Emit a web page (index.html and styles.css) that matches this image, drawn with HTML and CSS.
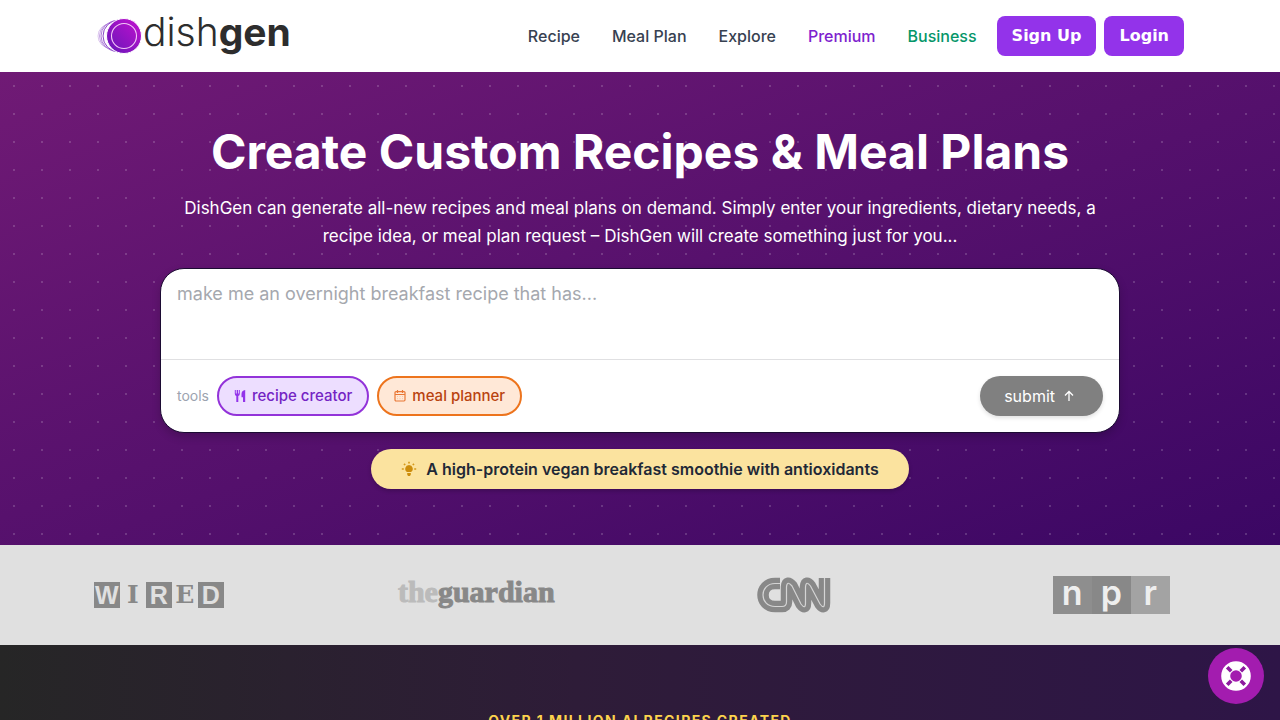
FILE: index.html
```html
<!DOCTYPE html>
<html lang="en">
<head>
<meta charset="utf-8">
<meta name="viewport" content="width=device-width, initial-scale=1">
<title>DishGen</title>
<link rel="stylesheet" href="styles.css">
</head>
<body>
<header class="header">
  <a class="brand" href="#" aria-label="dishgen">
    <svg class="brand-mark" viewBox="0 0 46 40" aria-hidden="true">
      <defs>
        <linearGradient id="plate" x1="0" y1="1" x2="1" y2="0">
          <stop offset="0" stop-color="#6416b8"/>
          <stop offset="1" stop-color="#c411cf"/>
        </linearGradient>
      </defs>
      <g fill="#fff" stroke="#8a45c8">
        <circle cx="14" cy="20" r="12" stroke-opacity=".3"/>
        <circle cx="17" cy="20" r="13.500" stroke-opacity=".5"/>
        <circle cx="20" cy="20" r="15" stroke-opacity=".7"/>
        <circle cx="23" cy="20" r="16"/>
      </g>
      <circle cx="28" cy="20" r="17.500" fill="url(#plate)" stroke="#fff"/>
      <circle cx="28" cy="20" r="12.500" fill="none" stroke="#f3c8f7" stroke-width="1.100"/>
    </svg>
    <span class="brand-name">dish<b>gen</b></span>
  </a>
  <nav class="nav">
    <a href="#">Recipe</a>
    <a href="#">Meal Plan</a>
    <a href="#">Explore</a>
    <a class="nav-premium" href="#">Premium</a>
    <a class="nav-business" href="#">Business</a>
  </nav>
  <div class="account">
    <button type="button">Sign Up</button>
    <button type="button">Login</button>
  </div>
</header>

<main>
  <section class="hero">
    <div class="hero-inner">
      <h1>Create Custom Recipes &amp; Meal Plans</h1>
      <p class="lead">DishGen can generate all-new recipes and meal plans on demand. Simply enter your ingredients, dietary needs, a recipe idea, or meal plan request – DishGen will create something just for you...</p>
      <form class="prompt">
        <textarea aria-label="Recipe request" placeholder="make me an overnight breakfast recipe that has..."></textarea>
        <div class="prompt-bar">
          <span class="tools-label">tools</span>
          <button type="button" class="tool tool-recipe">
            <svg viewBox="0 0 12 12" aria-hidden="true"><path d="M.8 0v3.800q0 1.700 1.500 2.200V12h2V6q1.500-.5 1.500-2.200V0H4.900v3.500h-.8V0H2.700v3.500h-.9V0zM11.200 0Q7.500.7 7.500 4v3.200H9V12h2.200z" fill="currentColor"/></svg>
            recipe creator
          </button>
          <button type="button" class="tool tool-meal">
            <svg viewBox="0 0 12 12" aria-hidden="true"><path d="M2 1.600h8q1 0 1 1v7.200q0 1.200-1 1.200H2q-1 0-1-1.200V2.600q0-1 1-1zM1 4.500h10M3.500 0v3M8.500 0v3" fill="none" stroke="currentColor" stroke-width="1.200"/><path d="M3 6.500h1m1.500 0h1m1.500 0h1M3 8.700h1m1.500 0h1m1.500 0h1" stroke="currentColor" stroke-opacity=".3"/></svg>
            meal planner
          </button>
          <button type="submit" class="submit">submit
            <svg viewBox="0 0 12 12" aria-hidden="true"><path d="M6 11V1.500M2 5.500l4-4 4 4" fill="none" stroke="currentColor" stroke-width="1.300"/></svg>
          </button>
        </div>
      </form>
      <button type="button" class="idea">
        <svg viewBox="0 0 16 16" aria-hidden="true">
          <path d="M8 4a3.800 3.800 0 0 0-2 7h4a3.800 3.800 0 0 0-2-7zM6.200 12h3.600v1.500L9 15H7l-.8-1.500z" fill="#cc8d0c"/>
          <path d="M8 .8v1.700M3 2.800l1.200 1.200M13 2.800l-1.200 1.200M.8 8h2M13.200 8h2" stroke="#d59a1c" stroke-width="1.700"/>
        </svg>
        A high-protein vegan breakfast smoothie with antioxidants
      </button>
    </div>
  </section>

  <section class="press">
    <div class="wired"><b>W</b><i>I</i><b>R</b><i>E</i><b>D</b></div>
    <div class="guardian"><span>the</span>guardian</div>
    <svg class="cnn" viewBox="0 0 74 36" role="img" aria-label="CNN">
      <defs>
        <path id="cnn-line" d="M23 6.500H18C2 6.500 2 29.500 18 29.500H25Q29.500 29.500 29.500 25V10Q30 3 35 9L44 27Q48.500 33 48.500 26V10Q49 3 53.500 9L63 27Q67.500 33 67.500 26V1"/>
      </defs>
      <use href="#cnn-line" fill="none" stroke="#888" stroke-width="11.500"/>
      <use href="#cnn-line" fill="none" stroke="#d4d4d4" stroke-width="1.200"/>
    </svg>
    <div class="npr"><span>n</span><span>p</span><span>r</span></div>
  </section>

  <section class="stats">
    <h2>Over 1 Million AI Recipes Created</h2>
  </section>
</main>

<button type="button" class="help" aria-label="Help">
  <svg viewBox="0 0 30 30" aria-hidden="true">
    <circle cx="15" cy="15" r="10.300" fill="none" stroke="#fff" stroke-width="9"/>
    <path d="M6.200 6.200l4 4M23.800 6.200l-4 4M6.200 23.800l4-4M23.800 23.800l-4-4" stroke="#8d1a9e" stroke-width="3.600"/>
  </svg>
</button>
</body>
</html>
```

FILE: styles.css
```css
*, *::before, *::after { box-sizing: border-box; }
body {
  margin: 0;
  font-family: Inter, "Liberation Sans", sans-serif;
  font-size: 16px;
  line-height: 24px;
  color: #1f2937;
}
button, textarea { font: inherit; margin: 0; }
button { border: 0; cursor: pointer; }
a { text-decoration: none; }

.header {
  display: flex;
  align-items: center;
  height: 72px;
  padding: 0 96px;
  background: #fff;
}
.brand { display: flex; align-items: center; color: #2d2d2d; }
.brand-mark { width: 46px; height: 40px; }
.brand-name {
  padding: 0 0 8px 1px;
  font-size: 39px;
  line-height: 40px;
  font-weight: 300;
}
.brand-name b { font-weight: 700; }
.nav { display: flex; gap: 32px; margin-left: auto; font-weight: 500; }
.nav a { color: #374151; }
.nav .nav-premium { color: #7e22ce; }
.nav .nav-business { color: #059669; }
.account { display: flex; gap: 8px; margin-left: 20px; }
.account button {
  height: 40px;
  padding: 0 15px;
  border-radius: 8px;
  background: #9333ea;
  color: #fff;
  font-family: "DejaVu Sans", sans-serif;
  font-weight: 700;
}

.hero {
  padding: 56px 16px;
  background:
    radial-gradient(circle, rgba(255, 255, 255, .17) 1px, transparent 1px) 0 0 / 28px 28px,
    linear-gradient(to bottom right, #701a75, #3b0764);
}
.hero-inner {
  display: flex;
  flex-direction: column;
  align-items: center;
  max-width: 960px;
  margin: 0 auto;
}
h1 {
  margin: 0 0 18px;
  color: #fff;
  font-size: 48px;
  line-height: 48px;
  font-weight: 700;
  text-align: center;
}
.lead {
  margin: 0 0 18px;
  color: #fff;
  font-size: 17px;
  line-height: 28px;
  text-align: center;
}
.prompt {
  width: 100%;
  margin-bottom: 16px;
  border: 1px solid #1c0b33;
  border-radius: 24px;
  background: #fff;
  box-shadow: 0 4px 8px rgba(0, 0, 0, .18);
  overflow: hidden;
}
.prompt textarea {
  display: block;
  width: 100%;
  height: 90px;
  padding: 12px 16px;
  border: 0;
  outline: 0;
  resize: none;
  background: transparent;
  font-size: 18px;
  line-height: 26px;
}
.prompt textarea::placeholder { color: #a5a8ae; }
.prompt-bar {
  display: flex;
  align-items: center;
  gap: 8px;
  padding: 16px;
  border-top: 1px solid #e0e0e2;
}
.tools-label { color: #9ca3af; font-size: 14px; }
.tool {
  display: flex;
  align-items: center;
  gap: 6px;
  height: 40px;
  padding: 0 15px;
  border: 2px solid;
  border-radius: 20px;
  font-size: 15px;
  font-weight: 500;
}
.tool svg { width: 12px; height: 12px; }
.tool-recipe { border-color: #9333d9; background: #eddeff; color: #7424c4; }
.tool-recipe svg { color: #9333ea; }
.tool-meal { border-color: #ed741d; background: #ffe8d7; color: #b9430f; }
.tool-meal svg { color: #e97735; }
.submit {
  display: flex;
  align-items: center;
  gap: 8px;
  height: 40px;
  margin-left: auto;
  padding: 0 28px 0 24px;
  border-radius: 20px;
  background: #808080;
  color: #fff;
  box-shadow: 0 2px 4px rgba(0, 0, 0, .12);
}
.submit svg { width: 12px; height: 12px; }
.idea {
  display: flex;
  align-items: center;
  gap: 9px;
  height: 40px;
  padding: 0 30px;
  border-radius: 20px;
  background: #fbe39f;
  color: #1f2937;
  font-weight: 600;
  box-shadow: 0 2px 4px rgba(0, 0, 0, .2);
}
.idea svg { width: 16px; height: 16px; }

.press {
  display: grid;
  grid-template-columns: repeat(4, 1fr);
  place-items: center;
  height: 100px;
  padding-right: 10px;
  background: #e0e0e0;
  color: #888;
}
.wired { display: flex; }
.wired b, .wired i {
  width: 26px;
  height: 26px;
  font: bold 25px/26px "Liberation Sans", sans-serif;
  text-align: center;
}
.wired b { background: #888; color: #e0e0e0; }
.wired i { font-family: "DejaVu Serif", serif; }
.guardian {
  padding-bottom: 6px;
  font: bold 30px/36px "Liberation Serif", serif;
  -webkit-text-stroke: 1px #888;
}
.guardian span { color: #bbb; -webkit-text-stroke-color: #bbb; }
.cnn { width: 74px; height: 36px; }
.npr { display: flex; background: #888; }
.npr span {
  width: 39px;
  height: 38px;
  color: #eee;
  font-size: 34px;
  font-weight: 600;
  line-height: 34px;
  text-align: center;
}
.npr span:nth-child(1) { background: #8e8e8e; }
.npr span:nth-child(3) { background: #a3a3a3; }

.stats { padding: 66px 16px 64px; background: linear-gradient(90deg, #262626, #2e1c38 45%, #2e1547); }
.stats h2 {
  margin: 0;
  color: #fcd34d;
  font-size: 14px;
  line-height: 20px;
  font-weight: 700;
  letter-spacing: 0.1em;
  text-align: center;
  text-transform: uppercase;
}

.help {
  position: fixed;
  right: 16px;
  bottom: 16px;
  display: grid;
  place-items: center;
  width: 56px;
  height: 56px;
  padding: 0;
  border-radius: 50%;
  background: #a31caf;
}
.help svg { width: 30px; height: 30px; }
```
